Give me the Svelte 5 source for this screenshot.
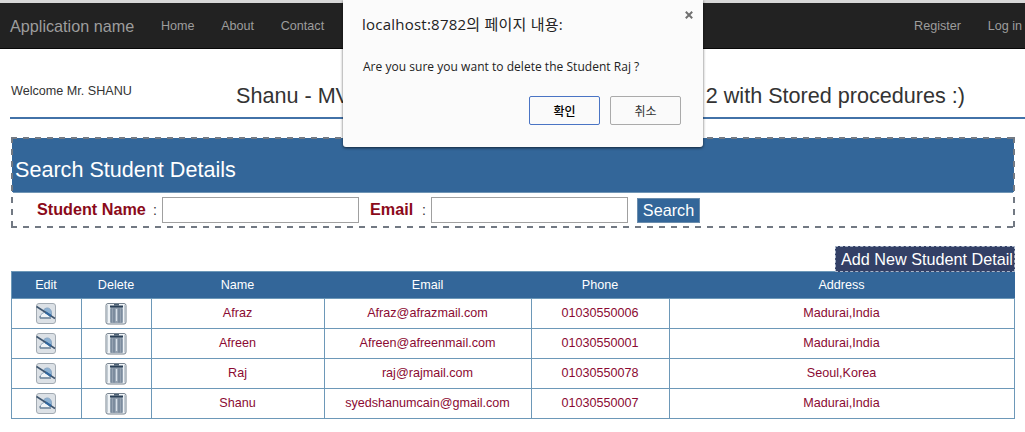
<script>
  const columns = ['Edit', 'Delete', 'Name', 'Email', 'Phone', 'Address'];
  const students = [
    { name: 'Afraz', email: 'Afraz@afrazmail.com', phone: '01030550006', address: 'Madurai,India' },
    { name: 'Afreen', email: 'Afreen@afreenmail.com', phone: '01030550001', address: 'Madurai,India' },
    { name: 'Raj', email: 'raj@rajmail.com', phone: '01030550078', address: 'Seoul,Korea' },
    { name: 'Shanu', email: 'syedshanumcain@gmail.com', phone: '01030550007', address: 'Madurai,India' }
  ];
</script>

<div class="page">
  <nav class="navbar">
    <span class="brand">Application name</span>
    <span class="link home">Home</span>
    <span class="link">About</span>
    <span class="link">Contact</span>
    <span class="link register">Register</span>
    <span class="link login">Log in</span>
  </nav>

  <header class="heading">
    <span class="welcome">Welcome Mr. SHANU</span>
    <h1><span>Shanu - MV</span><span>2 with Stored procedures :)</span></h1>
  </header>

  <section class="search">
    <h2>Search Student Details</h2>
    <div class="fields">
      <label for="student">Student Name</label><span class="colon">:</span>
      <input id="student" type="text" />
      <label class="email" for="email">Email</label><span class="colon">:</span>
      <input id="email" type="text" />
      <button class="go">Search</button>
    </div>
  </section>

  <div class="actions"><button class="add">Add New Student Detail</button></div>

  <div class="grid">
    {#each columns as c}<div class="th">{c}</div>{/each}
    {#each students as s}
      <div class="td icon">
        <svg width="22" height="23" viewBox="0 0 22 23">
          <rect x="1.500" y="1.500" width="19" height="20" rx="2.500" fill="#dce1e6" stroke="#a3abb3" />
          <path d="M8 9c2-4 6.500-4 8-.5 1 2.500.5 5-.5 6z" fill="#8db1d2" stroke="#7d9dbd" stroke-width=".8" />
          <path d="M5.500 15.500c-.5-2.500 1-4 3-4.500l1.500-2 5.500 6.500z" fill="#eff3f7" stroke="#7f97ae" stroke-width=".8" />
          <path d="M5 14v2.200h11" fill="none" stroke="#62788f" stroke-width="1" />
          <path d="M1.500 4.500 20 16.500" stroke="#40566f" stroke-width="1.500" />
          <path d="M10.500 10.300l5.500 3.600" stroke="#2f67a0" stroke-width="2.200" />
        </svg>
      </div>
      <div class="td icon">
        <svg width="22" height="23" viewBox="0 0 22 23">
          <rect x="1" y="1.500" width="20" height="20.500" rx="2" fill="#f0f4f7" stroke="#77838f" />
          <path d="M2.500 3v17.500M19.500 3v17.500" stroke="#c3ccd4" />
          <path d="M5.500 5h12v16h-12z" fill="#95a2b1" />
          <path d="M6 6.500v14M9 6.500v14M14 6.500v14M17 6.500v14" stroke="#62768b" />
          <path d="M11.500 7v12" stroke="#d6e0e9" stroke-width="1.300" />
          <path d="M5 4.500h13" stroke="#2b4057" stroke-width="2" />
          <path d="M9 2.800h5" stroke="#42576c" stroke-width="1.500" />
        </svg>
      </div>
      <div class="td">{s.name}</div>
      <div class="td">{s.email}</div>
      <div class="td">{s.phone}</div>
      <div class="td">{s.address}</div>
    {/each}
  </div>

  <div class="dialog" role="alertdialog">
    <svg class="close" width="8" height="8" viewBox="0 0 8 8"><path d="M.8.8l6.400 6.400M7.200.8L.8 7.200" stroke="#707070" stroke-width="2" /></svg>
    <div class="title">localhost:8782의 페이지 내용:</div>
    <div class="message">Are you sure you want to delete the Student Raj ?</div>
    <div class="buttons"><button class="ok">확인</button><button>취소</button></div>
  </div>
</div>

<style>
  :global(body) { background: #fff; }
  .page {
    position: relative;
    width: 1025px;
    height: 432px;
    overflow: hidden;
    box-sizing: border-box;
    font: 12.6px "Liberation Sans", Arial, sans-serif;
    color: #333;
  }
  .page * { box-sizing: border-box; }
  button { font: inherit; padding: 0; margin: 0; white-space: nowrap; }
  .navbar {
    display: flex;
    height: 49px;
    padding: 0 3px 0 10px;
    background: #222;
    border-top: 3px solid #d8d8d8;
    border-bottom: 1px solid #080808;
    color: #9d9d9d;
    line-height: 46px;
    white-space: nowrap;
  }
  .brand { font-size: 16.2px; line-height: 47px; }
  .link { margin-left: 26.700px; }
  .register { margin-left: auto; }
  .heading {
    display: flex;
    height: 70px;
    margin-left: 10px;
    border-bottom: 2px solid #4272a8;
  }
  .welcome { width: 226px; padding: 34px 0 0 1px; line-height: 16px; }
  h1 {
    display: flex;
    flex: 1;
    justify-content: space-between;
    margin: 0;
    padding: 34px 60px 0 0;
    font-size: 21.6px;
    font-weight: 400;
    line-height: 26px;
    white-space: nowrap;
  }
  .search {
    --dash: #727983 0 6px, transparent 6px 12px;
    width: 1004px;
    height: 91px;
    margin: 18px 0 0 11px;
    padding: 2px;
    background:
      repeating-linear-gradient(90deg, var(--dash)) 0 0 / 100% 2px no-repeat,
      repeating-linear-gradient(90deg, var(--dash)) 0 100% / 100% 2px no-repeat,
      repeating-linear-gradient(180deg, var(--dash)) 0 0 / 2px 100% no-repeat,
      repeating-linear-gradient(180deg, var(--dash)) 100% 0 / 2px 100% no-repeat,
      linear-gradient(#336699, #336699) 1px 1px / 1002px 54px no-repeat;
  }
  h2 {
    height: 54px;
    margin: 0;
    padding: 18px 0 0 2px;
    border-bottom: 1px solid #7095b5;
    color: #fff;
    font-size: 21.6px;
    font-weight: 400;
    line-height: 26px;
  }
  .fields { display: flex; align-items: center; height: 33px; padding-left: 24px; }
  label { width: 109px; color: #8b0a1a; font-size: 16.2px; font-weight: 700; white-space: nowrap; }
  .email { width: 45px; margin-left: 11px; }
  .colon { width: 16px; padding-left: 7px; font-size: 14px; }
  input { width: 197px; height: 26px; margin: 0; padding: 1px; border: 1px solid #a0a0a0; background: #fff; }
  .go {
    width: 63px;
    height: 25px;
    margin: 1px 0 0 9px;
    border: 1px solid #6a8cac;
    background: #336699;
    color: #fff;
    font-size: 16.2px;
  }
  .actions { display: flex; justify-content: flex-end; height: 43px; padding: 18px 10px 0 0; }
  .add {
    width: 180px;
    height: 26px;
    padding-left: 4px;
    border: 1px dashed #a9b5c8;
    background: #334066;
    color: #fff;
    font-size: 16.2px;
    line-height: 24px;
  }
  .grid {
    display: grid;
    grid-template-columns: 70px 70px 173px 207px 138px 345px;
    grid-template-rows: 27px repeat(4, 30px);
    width: 1004px;
    margin-left: 11px;
    border-left: 1px solid #6d98b8;
    border-top: 1px solid #6d98b8;
    text-align: center;
  }
  .th { padding-right: 2px; border-bottom: 1px solid #6d98b8; background: #336699; color: #fff; line-height: 26px; }
  .td { padding-right: 1px; border-right: 1px solid #6d98b8; border-bottom: 1px solid #6d98b8; color: #8b0a32; line-height: 28px; }
  .icon { display: flex; justify-content: center; padding: 3px 2px 0 0; }
  .dialog {
    position: absolute;
    left: 343px;
    top: 0;
    width: 360px;
    height: 147px;
    padding: 13px 22px 0 19px;
    border-radius: 0 0 3px 3px;
    background: #fbfbfb;
    box-shadow: 0 1px 3px rgba(0, 0, 0, 0.65);
    color: #222;
    font-family: "Open Sans", "Noto Sans CJK KR", sans-serif;
  }
  .close { position: absolute; right: 10px; top: 11px; }
  .title { height: 22px; font-size: 15px; line-height: 22px; letter-spacing: 0.23px; white-space: nowrap; }
  .message { height: 18px; margin-top: 23px; padding-left: 1px; font-size: 12px; line-height: 18px; letter-spacing: 0.03px; white-space: nowrap; }
  .buttons { display: flex; justify-content: flex-end; gap: 10px; margin-top: 20px; }
  .buttons button { width: 71px; height: 29px; border: 1px solid #aaa; border-radius: 2px; background: #fafafa; color: #333; font-size: 12px; }
  .buttons .ok { border-color: #4a74c4; color: #000; font-weight: 500; }
</style>
